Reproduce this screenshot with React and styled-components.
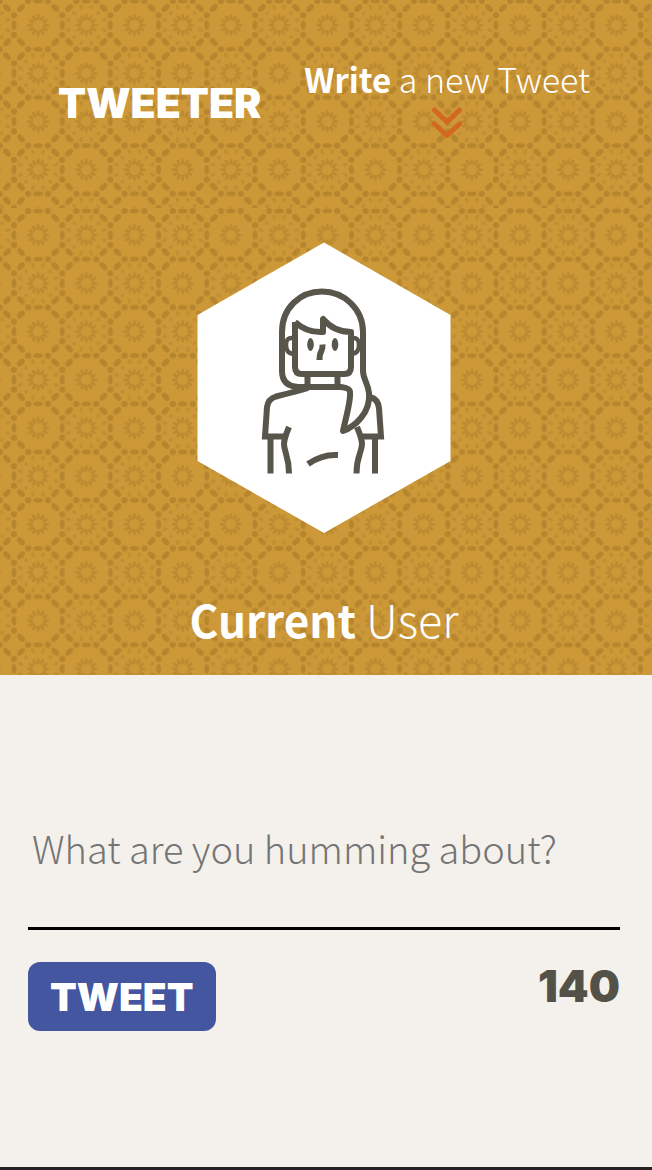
import React, { useState } from "react";
import styled, { createGlobalStyle } from "styled-components";

const GlobalStyle = createGlobalStyle`
  *, *::before, *::after { box-sizing: border-box; }
  body {
    margin: 0;
    background: #f4f1ec;
    color: #545149;
    font-family: "Noto Sans CJK JP", "Noto Sans", sans-serif;
  }
`;

const display = `font-family: Inter, "Open Sans", sans-serif; font-weight: 900;`;

const Patterned = styled.div`
  position: relative;
  isolation: isolate;
  background: #cd9837;
  color: #fff;
`;

const Backdrop = styled.svg`
  position: absolute;
  inset: 0;
  z-index: -1;
  width: 100%;
  height: 100%;
`;

const Nav = styled(Patterned).attrs({ as: "nav" })`
  display: flex;
  justify-content: space-between;
  height: 208px;
  padding: 55px 62px 0 58px;
`;

const Brand = styled.a`
  ${display}
  font-size: 41px;
  line-height: 48px;
  padding-top: 24px;
  color: #fff;
  text-decoration: none;
`;

const Compose = styled.button`
  display: flex;
  flex-direction: column;
  align-items: center;
  align-self: flex-start;
  padding: 0;
  border: 0;
  background: none;
  color: #fff;
  font: inherit;
  font-weight: 300;
  font-size: 34px;
  line-height: 48px;
  white-space: nowrap;
`;

const Strong = styled.strong`
  font-size: ${(p) => p.$size}px;
  font-weight: 700;
`;

const Header = styled(Patterned).attrs({ as: "header" })`
  display: flex;
  flex-direction: column;
  align-items: center;
  padding: 34px 4px 22px 0;
`;

const Avatar = styled.svg`
  width: 254px;
  height: 292px;
`;

const UserName = styled.h2`
  margin: 51px 0 0;
  font-size: 45px;
  line-height: 68px;
  font-weight: 300;
`;

const Form = styled.form`
  display: flex;
  flex-direction: column;
  padding: 132px 32px 136px 28px;
  border-bottom: 3px solid #252225;
`;

const Field = styled.textarea`
  display: block;
  width: 100%;
  height: 123px;
  padding: 11px 4px;
  border: 0;
  border-bottom: 3px solid #000;
  border-radius: 0;
  outline: 0;
  resize: none;
  background: transparent;
  color: #545149;
  font-family: inherit;
  font-size: 38px;
  font-weight: 300;
  line-height: 60px;
  &::placeholder { color: #757575; opacity: 1; }
`;

const Actions = styled.div`
  display: flex;
  justify-content: space-between;
  align-items: flex-start;
  margin-top: 32px;
`;

const Submit = styled.button`
  ${display}
  height: 69px;
  padding: 0 22px;
  border: 0;
  border-radius: 12px;
  background: #4556a1;
  color: #fff;
  font-size: 39px;
  line-height: 69px;
`;

const Counter = styled.output`
  ${display}
  font-size: 44px;
  line-height: 48px;
`;

function Petals({ x, y }) {
  return (
    <g transform={`translate(${x} ${y})`} fill="#bb8a31">
      {Array.from({ length: 12 }, (_, i) => (
        <ellipse key={i} cx="0" cy="-8" rx="1.5" ry="3.2" transform={`rotate(${i * 30})`} />
      ))}
      <circle r="7" fill="none" stroke="#bd8c31" strokeWidth="2.5" opacity=".6" />
    </g>
  );
}

function Lattice({ x, y }) {
  return (
    <g transform={`translate(${x} ${y})`} fill="#b6862f">
      {[0, 90, 180, 270].map((a) => (
        <g key={a} transform={`rotate(${a})`}>
          <circle cx="14.2" cy="0" r="3.1" />
          <ellipse cx="7" cy="7" rx="4.7" ry="2.8" transform="rotate(-45 7 7)" />
        </g>
      ))}
      <ellipse cx="24.1" cy="0" rx="4.8" ry="2.5" />
      <ellipse cx="0" cy="24.1" rx="2.5" ry="4.8" />
    </g>
  );
}

function Tile({ id, top }) {
  const c = 48.2;
  return (
    <Backdrop aria-hidden="true">
      <defs>
        <pattern id={id} x="14" y={top} width={c * 2} height={c * 2} patternUnits="userSpaceOnUse">
          {[-1, 0, 1, 2].map((r) =>
            [-1, 0, 1, 2].map((k) => <Lattice key={`${r}${k}`} x={k * c} y={r * c} />)
          )}
          {[0, 1].map((r) => [0, 1].map((k) => <Petals key={`${r}${k}`} x={(k + 0.5) * c} y={(r + 0.5) * c} />))}
          {[[1.5, 0.5], [0.5, 1.5]].map(([x, y]) => (
            <g key={x} transform={`translate(${x * c} ${y * c})`} fill="#c08f33">
              {[0, 90, 180, 270].map((a) => (
                <g key={a} transform={`rotate(${a})`}>
                  <ellipse cx="-5" cy="-18" rx="1.8" ry="2.8" transform="rotate(-25 -5 -18)" />
                  <ellipse cx="5" cy="-18" rx="1.8" ry="2.8" transform="rotate(25 5 -18)" />
                  <circle cx="12" cy="-12" r="2" />
                </g>
              ))}
            </g>
          ))}
        </pattern>
      </defs>
      <rect width="100%" height="100%" fill={`url(#${id})`} />
    </Backdrop>
  );
}

function Chevrons() {
  return (
    <svg width="32" height="36" viewBox="0 -1 32 36" fill="none" stroke="#d2691e" strokeWidth="5" strokeLinecap="round" strokeLinejoin="round" aria-hidden="true">
      <path d="M3.500 6 16 18 28.500 6M3.500 20 16 31.500 28.500 20" />
    </svg>
  );
}

function Portrait() {
  return (
    <Avatar viewBox="0 0 254 292" role="img" aria-label="Current user">
      <path fill="#fff" d="M127 .5 253.500 73V219L127 291 .5 219V73Z" />
      <g transform="translate(-7 -7)" fill="none" stroke="#58554b" strokeWidth="6" strokeLinejoin="round">
        <path d="M118 152H108Q92 151 92 136V97C92 73 110 56.500 132 56.500S173 74 173 97V136C173 144 178 148 179 158C181 178 164 192 153 196C157 178 161 165 160 157Q160 153 151 152H116" />
        <path d="M105 87V132Q105 139 112 139H154Q161 139 161 132V97Q144 97 133 84V97Q117 98 105 87" />
        <path d="M117.500 141V152M147.500 141V152" />
        <path strokeWidth="4.500" d="M103 103Q96 102 96 110T103 119M162 103Q169 102 169 110T162 119" />
        <path strokeLinejoin="miter" d="M118 153C108 156 96 159 86 161.500Q78 164 77 172L75 201.500H97M180 162Q188 164 189 173L191 201.500H171" />
        <path d="M80.500 201V238.500M99 192Q94 204 94 209C94 217 99 221 99 238.500M167 192Q172 204 172 209C172 217 166.500 221 166.500 238.500M185 201V238.500" />
        <path d="M118 229Q132 219 148 220" />
        <path strokeLinejoin="miter" d="M132.500 109.500C133 118 129.500 114 129.500 125" />
        <g fill="#58554b" stroke="none">
          <ellipse cx="120.500" cy="109.500" rx="3.300" ry="6.500" />
          <ellipse cx="145" cy="109.500" rx="3.300" ry="6.500" />
        </g>
      </g>
    </Avatar>
  );
}

export default function App() {
  const [text, setText] = useState("");
  return (
    <>
      <GlobalStyle />
      <Nav>
        <Tile id="nav-tile" top={1} />
        <Brand href="#">TWEETER</Brand>
        <Compose type="button">
          <span><Strong $size={33}>Write</Strong> a new Tweet</span>
          <Chevrons />
        </Compose>
      </Nav>
      <Header>
        <Tile id="header-tile" top={3} />
        <Portrait />
        <UserName><Strong $size={44}>Current</Strong> User</UserName>
      </Header>
      <main>
        <Form onSubmit={(e) => e.preventDefault()}>
          <Field
            aria-label="Tweet text"
            placeholder="What are you humming about?"
            value={text}
            onChange={(e) => setText(e.target.value)}
          />
          <Actions>
            <Submit type="submit">TWEET</Submit>
            <Counter>{140 - text.length}</Counter>
          </Actions>
        </Form>
      </main>
    </>
  );
}
